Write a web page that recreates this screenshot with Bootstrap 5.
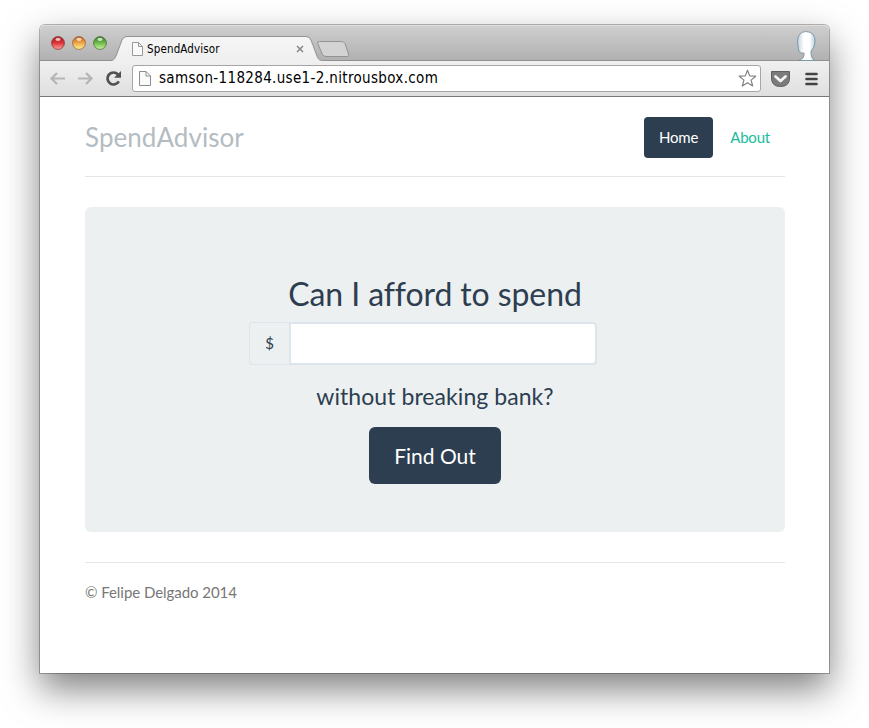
<!DOCTYPE html>
<html lang="en">
<head>
<meta charset="utf-8">
<title>SpendAdvisor</title>
<meta name="viewport" content="width=device-width, initial-scale=1">
<link href="https://cdn.jsdelivr.net/npm/bootstrap@5.3.0/dist/css/bootstrap.min.css" rel="stylesheet">
<style>
body{font-family:Lato,sans-serif;font-size:15px;line-height:1.42857;color:#2c3e50;background:#fff;height:728px;overflow:hidden;padding:25px 40px 0 40px}
.window{width:789px;height:648px;background:#fff;border-radius:5px 5px 0 0;box-shadow:0 0 0 1px rgba(0,0,0,.27),0 16px 36px rgba(0,0,0,.5)}
.chrome{font-family:"DejaVu Sans Condensed","DejaVu Sans",sans-serif;font-stretch:condensed;color:#000}
.tabstrip{height:36px;background:linear-gradient(#cfcfcf,#b0b0b0);border-radius:5px 5px 0 0;box-shadow:inset 0 1px #dedede}
.tabstrip svg{overflow:visible}
.tab-item{width:213px;height:36px;margin-left:4px}
.tab-label{padding:12px 17px 0 16px;height:36px}
.tab-title{font-size:11.5px;line-height:24px;letter-spacing:.14px;padding-left:4px}
.toolbar{height:36px;background:linear-gradient(#f0f0f0,#dfdfdf);border-bottom:1px solid #777}
.omnibox{width:629px;height:27px;background:#fff;border:1px solid #a6a6a6;border-radius:3px;margin-left:9px;padding:0 3px 0 6px}
.address{font-size:15px;line-height:25px;letter-spacing:.34px;padding-left:8px}
.page{width:700px;margin-left:45px}
.masthead{height:80px;padding-top:20px;border-bottom:1px solid #e5e5e5}
.brand{font-size:26px;line-height:41px;letter-spacing:.06px;color:#b4bcc2}
.nav-pills{gap:2px}
.nav-pills .nav-link{font-size:15px;line-height:21px;letter-spacing:-.2px;padding:10px 15px;border-radius:4px;color:#18bc9c}
.nav-pills .nav-link.active{background:#2c3e50;color:#fff}
.hero{margin-top:30px;height:325px;background:#ecf0f1;border-radius:6px;padding-top:69px}
.question{font-size:32px;line-height:36px;margin-bottom:10px;letter-spacing:-.1px;font-variant-ligatures:none}
.amount{width:348px;height:43px;margin-left:164px}
.amount .input-group-text{width:41px;padding:0 1px 0 0;background:#ecf0f1;border:1px solid #dce4ec;border-right:0;border-radius:4px 0 0 4px;font-size:15px;color:#2c3e50}
.amount .form-control{border:2px solid #dce4ec;border-radius:0 4px 4px 0}
.follow{font-size:23px;line-height:25px;margin:19px 0 18px;letter-spacing:.06px}
.btn-find{width:132px;height:57px;font-size:21px;line-height:1.33;color:#fff;background:#2c3e50;border:0;border-radius:6px}
.foot{margin-top:30px;padding-top:19px;border-top:1px solid #e5e5e5;color:#777;font-size:15px;line-height:21px;letter-spacing:-.05px}
</style>
</head>
<body>
<div class="window">
  <div class="chrome">
    <div class="tabstrip d-flex">
      <svg width="72" height="36" viewBox="0 0 72 36" class="flex-shrink-0">
        <defs>
          <linearGradient id="r" x2="0" y2="1"><stop stop-color="#a8191d"/><stop offset=".5" stop-color="#dc3439"/><stop offset="1" stop-color="#ffa5a0"/></linearGradient>
          <linearGradient id="y" x2="0" y2="1"><stop stop-color="#c35a18"/><stop offset=".5" stop-color="#efa747"/><stop offset="1" stop-color="#fff39a"/></linearGradient>
          <linearGradient id="g" x2="0" y2="1"><stop stop-color="#367c29"/><stop offset=".5" stop-color="#70b94d"/><stop offset="1" stop-color="#c9f69b"/></linearGradient>
        </defs>
        <g stroke-opacity=".75"><circle cx="18" cy="18" r="6.4" fill="url(#r)" stroke="#813033"/><circle cx="39" cy="18" r="6.4" fill="url(#y)" stroke="#93602d"/><circle cx="60" cy="18" r="6.4" fill="url(#g)" stroke="#416d35"/></g>
        <g fill="#fff" opacity=".7"><ellipse cx="18" cy="14.3" rx="2.6" ry="1.6"/><ellipse cx="39" cy="14.3" rx="2.6" ry="1.6"/><ellipse cx="60" cy="14.3" rx="2.6" ry="1.6"/></g>
      </svg>
      <div class="tab-item position-relative flex-shrink-0">
        <svg class="position-absolute top-0 start-0" width="213" height="36" viewBox="0 0 213 36">
          <defs><linearGradient id="t" x2="0" y2="1"><stop stop-color="#f6f6f6"/><stop offset="1" stop-color="#efefef"/></linearGradient></defs>
          <path d="M-6 36C-2 35.500-2 34 0 31L6 15Q7.500 11.500 11 11.500H190Q193.500 11.500 195 15L201 31C202.500 35 204 35.500 208 36Z" fill="url(#t)"/>
          <path d="M-76 35.500H-6C-2 35.500-1.500 34 0 31L6 15Q7.500 11.500 11 11.500H190Q193.500 11.500 195 15L201 31C202.500 35 204 35.500 208 35.500H213" fill="none" stroke="#919191"/>
        </svg>
        <div class="tab-label d-flex align-items-center position-relative">
          <svg width="11" height="14" viewBox="0 0 11 14" class="flex-shrink-0"><path d="M.5.5H6.500L10.500 4.500V13.500H.5ZM6.500.5V4.500H10.500" fill="#fafafa" stroke="#999"/></svg>
          <span class="tab-title">SpendAdvisor</span>
          <svg width="8" height="8" viewBox="0 0 8 8" class="ms-auto me-2"><path d="M1 1L7 7M7 1L1 7" stroke="#868686" stroke-width="1.500"/></svg>
        </div>
      </div>
      <svg width="460" height="36" viewBox="0 0 460 36" class="flex-shrink-0">
        <defs><linearGradient id="h" x2="1"><stop stop-color="#bdd3df"/><stop offset=".35" stop-color="#fff"/><stop offset=".7" stop-color="#fff"/><stop offset="1" stop-color="#b7cfdd"/></linearGradient></defs>
        <path d="M0 35.500H500" stroke="#919191"/>
        <path d="M-11.300 18.500Q-12.500 16.500-9.500 16.500H12.500Q15 16.500 16 18.500L19.500 29Q20.500 31.500 18 31.500H-3Q-5.500 31.500-6.500 29.500Z" fill="#d3d3d3" stroke="#929292"/>
        <path d="M468.500 35.500Q476 34 475 28Q470 29 469.500 24L468.500 17Q468.500 7 477 6.500Q486.500 7 486 17Q486 22 482 26Q481.500 33 486 35.500Z" fill="url(#h)" stroke="#7792a3" stroke-width=".9"/>
      </svg>
    </div>
    <div class="toolbar d-flex align-items-center">
      <svg width="83" height="35" viewBox="0 0 83 35" class="flex-shrink-0">
        <g fill="none" stroke="#b5b5b5" stroke-width="2.200"><path d="M11.500 17.500H25M17 12L11.500 17.500L17 23M38 17.500H51.500M46 12L51.500 17.500L46 23"/></g>
        <path d="M78 13.500A6 6 0 1 0 78.800 20.300" fill="none" stroke="#505050" stroke-width="2.700"/><path d="M81 10V16.800H74Z" fill="#505050"/>
      </svg>
      <div class="omnibox d-flex align-items-center flex-shrink-0">
        <svg width="12" height="15" viewBox="0 0 12 15"><path d="M.5.5H7L11.500 5V14.500H.5ZM7 .5V5H11.500" fill="#fafafa" stroke="#8d8d8d"/></svg>
        <span class="address">samson-118284.use1-2.nitrousbox.com</span>
        <svg width="19" height="19" viewBox="0 0 19 19" class="ms-auto"><path d="M9.500 1.200L11.700 6.900L17.700 7.200L13.100 11.100L14.700 17L9.500 13.700L4.300 17L5.900 11.100L1.300 7.200L7.300 6.900Z" fill="#fff" stroke="#828282" stroke-width="1.200" stroke-linejoin="round"/></svg>
      </div>
      <svg width="68" height="35" viewBox="0 0 68 35" class="flex-shrink-0">
        <path d="M10.500 10.500H28.500V17Q28.500 25.500 19.500 25.500T10.500 17Z" fill="#7b7b7b" stroke="#5f5f5f"/><path d="M14.500 15.500L19.500 20L24.500 15.500" fill="none" stroke="#f4f4f4" stroke-width="2.800" stroke-linecap="round" stroke-linejoin="round"/>
        <path d="M45.500 13H55.500M45.500 18H55.500M45.500 23H55.500" stroke="#434343" stroke-width="2.600" stroke-linecap="round"/>
      </svg>
    </div>
  </div>
  <div class="page">
    <header class="masthead d-flex justify-content-between align-items-start">
      <h3 class="brand fw-normal m-0">SpendAdvisor</h3>
      <ul class="nav nav-pills">
        <li class="nav-item"><a class="nav-link active" href="#">Home</a></li>
        <li class="nav-item"><a class="nav-link" href="#">About</a></li>
      </ul>
    </header>
    <main class="hero text-center">
      <h1 class="question fw-normal mt-0">Can I afford to spend</h1>
      <div class="input-group amount flex-nowrap">
        <span class="input-group-text justify-content-center">$</span>
        <input type="text" class="form-control" aria-label="Amount">
      </div>
      <p class="follow">without breaking bank?</p>
      <button type="button" class="btn btn-find p-0">Find Out</button>
    </main>
    <footer class="foot">© Felipe Delgado 2014</footer>
  </div>
</div>
</body>
</html>
